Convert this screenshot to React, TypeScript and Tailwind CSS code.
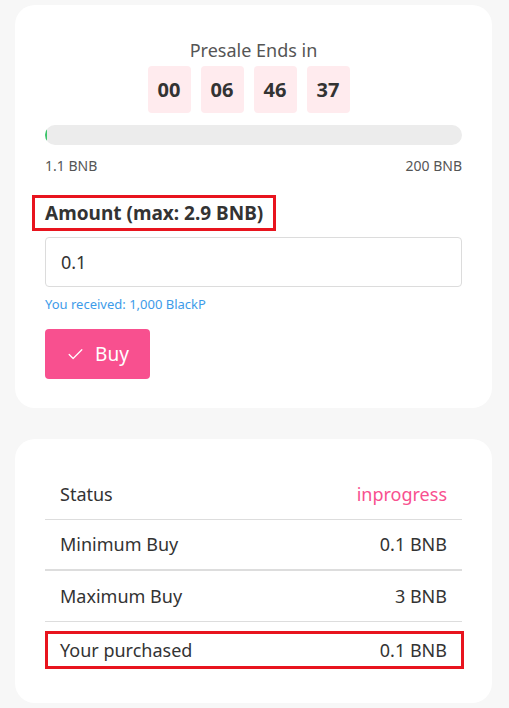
import React from 'react';
import { Check } from 'lucide-react';

const countdown = ['00', '06', '46', '37'];

const rows = [
  { label: 'Status', value: 'inprogress', accent: true },
  { label: 'Minimum Buy', value: '0.1 BNB', thick: true },
  { label: 'Maximum Buy', value: '3 BNB' },
];

const App = () => {
  const raised = 1.1;
  const goal = 200;
  const pct = (raised / goal) * 100;

  return (
    <div
      className="min-h-[708px] w-[509px] bg-[#f7f7f7] px-[15px] pt-[5px] pb-[6px] text-[#333]"
      style={{ fontFamily: '"Noto Sans", "Open Sans", sans-serif' }}
    >
      {/* Presale card */}
      <div className="w-[477px] rounded-[20px] bg-white px-[30px] pt-[32px] pb-[29px]">
        <div className="text-center text-[18px] leading-[27px] text-[#555]">Presale Ends in</div>
        <div className="mt-[2px] flex justify-center">
          {countdown.map((v, i) => (
            <div
              key={i}
              className="mr-[10px] flex h-[47px] w-[43px] items-center justify-center rounded-[4px] bg-[#ffebee] text-[20px] font-bold text-[#333]"
            >
              {v}
            </div>
          ))}
        </div>

        <div className="mt-[12px] h-[20px] w-full overflow-hidden rounded-full bg-[#ececec]">
          <div className="h-full rounded-full bg-[#3cc46a]" style={{ width: `${pct}%` }} />
        </div>
        <div className="mt-[11px] flex justify-between text-[14px] leading-[20px] text-[#555]">
          <span>{raised} BNB</span>
          <span>{goal} BNB</span>
        </div>

        <div className="mt-[19px]">
          <span className="-ml-[13px] inline-block border-[3px] border-[#e8141e] px-[10px] text-[19px] leading-[30px] font-bold text-[#333]">
            Amount (max: 2.9 BNB)
          </span>
        </div>
        <input
          defaultValue="0.1"
          className="mt-[6px] block h-[50px] w-full rounded-[4px] border border-[#dcdcdc] px-[15px] text-[18px] text-[#333] outline-none"
          style={{ fontFamily: '"Noto Sans", "Open Sans", sans-serif' }}
        />
        <div className="mt-[7px] text-[13px] leading-[20px] text-[#3d9be9]">You received: 1,000 BlackP</div>
        <button className="mt-[15px] flex h-[50px] w-[105px] items-center justify-center gap-[10px] rounded-[4px] bg-[#f8508f] text-[19px] text-white">
          <Check size={19} strokeWidth={1.6} />
          Buy
        </button>
      </div>

      {/* Details card */}
      <div className="mt-[31px] w-[477px] rounded-[20px] bg-white px-[30px] pt-[30px] pb-[34px]">
        {rows.map((r) => (
          <div
            key={r.label}
            className={`flex h-[51px] items-center justify-between px-[15px] text-[18px] ${r.thick ? 'border-b-2' : 'border-b'} border-[#dddddd]`}
          >
            <span>{r.label}</span>
            <span className={r.accent ? 'text-[#f8508f]' : ''}>{r.value}</span>
          </div>
        ))}
        <div className="-mr-[2px] mt-[9px] flex h-[38px] items-center justify-between border-[3px] border-[#e8141e] pr-[14px] pl-[12px] text-[18px]">
          <span>Your purchased</span>
          <span>0.1 BNB</span>
        </div>
      </div>
    </div>
  );
};

export default App;
